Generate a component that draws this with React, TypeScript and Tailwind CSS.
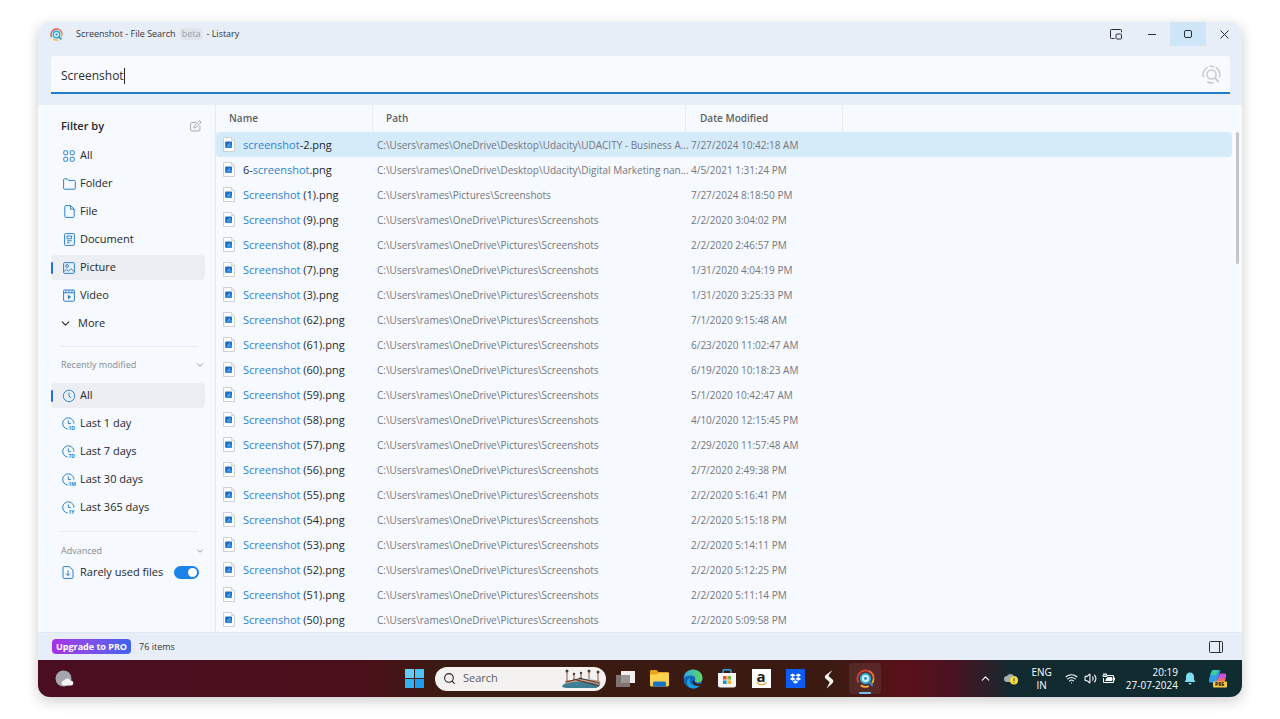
import React, { useState } from 'react';
import {
    Search,
    ChevronDown,
    ChevronUp,
    Wifi,
    Volume2,
} from 'lucide-react';

const files = [
    ['', 'screenshot', '-2.png', 'C:\\Users\\rames\\OneDrive\\Desktop\\Udacity\\UDACITY - Business A...', '7/27/2024 10:42:18 AM'],
    ['6-', 'screenshot', '.png', 'C:\\Users\\rames\\OneDrive\\Desktop\\Udacity\\Digital Marketing nan...', '4/5/2021 1:31:24 PM'],
    ['', 'Screenshot', ' (1).png', 'C:\\Users\\rames\\Pictures\\Screenshots', '7/27/2024 8:18:50 PM'],
    ['', 'Screenshot', ' (9).png', 'C:\\Users\\rames\\OneDrive\\Pictures\\Screenshots', '2/2/2020 3:04:02 PM'],
    ['', 'Screenshot', ' (8).png', 'C:\\Users\\rames\\OneDrive\\Pictures\\Screenshots', '2/2/2020 2:46:57 PM'],
    ['', 'Screenshot', ' (7).png', 'C:\\Users\\rames\\OneDrive\\Pictures\\Screenshots', '1/31/2020 4:04:19 PM'],
    ['', 'Screenshot', ' (3).png', 'C:\\Users\\rames\\OneDrive\\Pictures\\Screenshots', '1/31/2020 3:25:33 PM'],
    ['', 'Screenshot', ' (62).png', 'C:\\Users\\rames\\OneDrive\\Pictures\\Screenshots', '7/1/2020 9:15:48 AM'],
    ['', 'Screenshot', ' (61).png', 'C:\\Users\\rames\\OneDrive\\Pictures\\Screenshots', '6/23/2020 11:02:47 AM'],
    ['', 'Screenshot', ' (60).png', 'C:\\Users\\rames\\OneDrive\\Pictures\\Screenshots', '6/19/2020 10:18:23 AM'],
    ['', 'Screenshot', ' (59).png', 'C:\\Users\\rames\\OneDrive\\Pictures\\Screenshots', '5/1/2020 10:42:47 AM'],
    ['', 'Screenshot', ' (58).png', 'C:\\Users\\rames\\OneDrive\\Pictures\\Screenshots', '4/10/2020 12:15:45 PM'],
    ['', 'Screenshot', ' (57).png', 'C:\\Users\\rames\\OneDrive\\Pictures\\Screenshots', '2/29/2020 11:57:48 AM'],
    ['', 'Screenshot', ' (56).png', 'C:\\Users\\rames\\OneDrive\\Pictures\\Screenshots', '2/7/2020 2:49:38 PM'],
    ['', 'Screenshot', ' (55).png', 'C:\\Users\\rames\\OneDrive\\Pictures\\Screenshots', '2/2/2020 5:16:41 PM'],
    ['', 'Screenshot', ' (54).png', 'C:\\Users\\rames\\OneDrive\\Pictures\\Screenshots', '2/2/2020 5:15:18 PM'],
    ['', 'Screenshot', ' (53).png', 'C:\\Users\\rames\\OneDrive\\Pictures\\Screenshots', '2/2/2020 5:14:11 PM'],
    ['', 'Screenshot', ' (52).png', 'C:\\Users\\rames\\OneDrive\\Pictures\\Screenshots', '2/2/2020 5:12:25 PM'],
    ['', 'Screenshot', ' (51).png', 'C:\\Users\\rames\\OneDrive\\Pictures\\Screenshots', '2/2/2020 5:11:14 PM'],
    ['', 'Screenshot', ' (50).png', 'C:\\Users\\rames\\OneDrive\\Pictures\\Screenshots', '2/2/2020 5:09:58 PM'],
];

const GridIcon = () => (
    <svg width="12" height="12" viewBox="0 0 12 12" fill="none" stroke="currentColor">
        <rect x="0.8" y="0.8" width="3.9" height="3.9" rx="0.8" />
        <rect x="7.3" y="0.8" width="3.9" height="3.9" rx="0.8" />
        <rect x="0.8" y="7.3" width="3.9" height="3.9" rx="0.8" />
        <rect x="7.3" y="7.3" width="3.9" height="3.9" rx="0.8" />
    </svg>
);

const FolderIcon = () => (
    <svg width="13" height="12" viewBox="0 0 13 12" fill="none" stroke="currentColor">
        <path d="M.6 1.6c0-.5.3-.8.8-.8h2.8l1.3 1.6h6c.5 0 .8.3.8.8v7.2c0 .5-.3.8-.8.8H1.4c-.5 0-.8-.3-.8-.8z" />
    </svg>
);

const FileIcon = () => (
    <svg width="11" height="13" viewBox="0 0 11 13" fill="none" stroke="currentColor">
        <path d="M.8 1.4c0-.4.3-.8.8-.8h5l3.6 3.5v7.5c0 .5-.3.8-.8.8H1.6c-.5 0-.8-.3-.8-.8zM6.5.8v3.4h3.6" />
    </svg>
);

const DocumentIcon = () => (
    <svg width="11" height="13" viewBox="0 0 11 13" fill="none" stroke="currentColor">
        <rect x="0.6" y="0.6" width="9.8" height="11.8" rx="1" />
        <path d="M3 3h4.6v2.8H3zM3 7.8h4.8M3 9.8h2.6" />
    </svg>
);

const PictureIcon = () => (
    <svg width="12" height="12" viewBox="0 0 12 12" fill="none" stroke="currentColor">
        <rect x="0.6" y="0.6" width="10.8" height="10.8" rx="1" />
        <circle cx="4.1" cy="4" r="1.4" />
        <path d="M.9 9.6l2.5-2.3 2 1.9 2.5-2.6 3.2 3" />
    </svg>
);

const VideoIcon = () => (
    <svg width="12" height="13" viewBox="0 0 12 13" fill="none" stroke="currentColor">
        <rect x="0.6" y="1" width="10.8" height="11.2" rx="1" />
        <path d="M.6 3.8h10.8M3.4 1.2l-.8 2.4M6.4 1.2l-.8 2.4M9.4 1.2l-.8 2.4" />
        <path d="M5 6l3 2-3 2z" fill="currentColor" strokeWidth="0.4" />
    </svg>
);

const ClockIcon = ({ tag }: { tag?: string }) => (
    <svg width="14" height="14" viewBox="0 0 14 14" fill="none" stroke="currentColor">
        {tag ? (
            <>
                <path d="M5.6 12A5.6 5.6 0 1 1 11.9 6.6M6.3 3.4v3.2h2.6" />
                <text x="6.4" y="13" fontSize="5" fontWeight="700" fill="currentColor" stroke="none">{tag}</text>
            </>
        ) : (
            <path d="M7 1.2a5.7 5.7 0 1 0 .01 0M7 3.6V7l2 2" />
        )}
    </svg>
);

const RareIcon = () => (
    <svg width="12" height="13" viewBox="0 0 12 13" fill="none" stroke="currentColor">
        <path d="M1 1.4c0-.4.3-.8.8-.8h5.4L11 4.1v7.5c0 .5-.3.8-.8.8H1.8c-.5 0-.8-.3-.8-.8zM6 4.4v5M4 7.6l2 2 2-2" />
    </svg>
);

const PngIcon = () => (
    <svg width="12" height="15" viewBox="0 0 12 15" className="shrink-0">
        <path d="M.5.5h8l3 3v11H.5z" fill="#fdfdfe" stroke="#cdd0d5" />
        <path d="M8.5.5v3h3" fill="#eceff2" stroke="#cdd0d5" strokeWidth="0.8" />
        <rect x="2.200" y="4.600" width="6.800" height="6.400" rx="1" fill="#1a6cc4" />
        <path d="M2.600 10.800l4-3.800 2.400 1.200v2c0 .5-.4.8-.9.8H3z" fill="#2f8fe6" />
        <path d="M4.600 9L7 6.200" stroke="#bfe3fa" strokeWidth="0.7" />
    </svg>
);

const Logo = ({ size }: { size: number }) => (
    <svg width={size} height={size} viewBox="0 0 20 20" fill="none">
        <path d="M2.600 14.200A8.600 8.600 0 0 1 13.500 2.200" stroke="#dc4238" strokeWidth="1.900" />
        <path d="M13.500 2.200a8.600 8.600 0 0 1 5 8.500" stroke="#e8752e" strokeWidth="1.900" />
        <path d="M18.500 10.700a8.600 8.600 0 0 1-1.700 4.300" stroke="#f3b63a" strokeWidth="1.900" />
        <path d="M5 17a8.600 8.600 0 0 0 8.500 1" stroke="#f3b63a" strokeWidth="1.900" />
        <circle cx="10" cy="10" r="5" fill="#c9eef5" stroke="#27a7cf" strokeWidth="2" />
        <circle cx="10" cy="10" r="1.500" fill="#2b86c9" />
        <path d="M13.600 13.600l4 4" stroke="#2b86c9" strokeWidth="2.200" />
    </svg>
);

const SearchLogo = () => (
    <svg width="19" height="19" viewBox="0 0 20 20" fill="none" stroke="#c8cbcf" strokeWidth="1.600">
        <path d="M1.600 13A8.800 8.800 0 0 1 6 2.200M8 1.400a8.800 8.800 0 0 1 5 .4M5.500 17.600a8.800 8.800 0 0 0 7 .8M14.500 2.600a8.800 8.800 0 0 1 3.800 10.500" />
        <circle cx="10" cy="10" r="4.800" />
        <path d="M13.400 13.400l4.400 4.400" strokeWidth="2" />
    </svg>
);

const typeFilters = [
    { name: 'All', icon: <GridIcon /> },
    { name: 'Folder', icon: <FolderIcon /> },
    { name: 'File', icon: <FileIcon /> },
    { name: 'Document', icon: <DocumentIcon /> },
    { name: 'Picture', icon: <PictureIcon /> },
    { name: 'Video', icon: <VideoIcon /> },
];

const dateFilters = [
    { name: 'All', icon: <ClockIcon /> },
    { name: 'Last 1 day', icon: <ClockIcon tag="1D" /> },
    { name: 'Last 7 days', icon: <ClockIcon tag="7D" /> },
    { name: 'Last 30 days', icon: <ClockIcon tag="1M" /> },
    { name: 'Last 365 days', icon: <ClockIcon tag="1Y" /> },
];

const FilterItem = ({ name, icon, active, onClick }: { name: string; icon: React.ReactNode; active: boolean; onClick: () => void }) => (
    <button
        onClick={onClick}
        className={`flex h-[25px] w-full items-center rounded-sm text-left ${active ? 'bg-[#edeef3]' : ''}`}
    >
        <span className={`h-3 w-[2px] rounded ${active ? 'bg-[#1976d2]' : ''}`}></span>
        <span className="ml-[9px] flex w-[14px] justify-center text-[#2b82d0]">{icon}</span>
        <span className="ml-1">{name}</span>
    </button>
);

const TitleBar = () => (
    <header className="flex h-[34px] items-start justify-between">
        <div className="flex h-6 items-center pl-3">
            <Logo size={13} />
            <h1 className="ml-[13px] flex items-center gap-1 text-[9px] text-[#33363b]">
                Screenshot - File Search
                <span className="rounded-sm bg-[#e0e4eb] px-[2px] leading-3 text-[#9a9fa8]">beta</span>
                - Listary
            </h1>
        </div>
        <div className="flex text-[#2a2d31]">
            <button aria-label="Compact view" className="flex h-6 w-9 items-center justify-center">
                <svg width="12" height="11" viewBox="0 0 12 11" fill="none" stroke="currentColor">
                    <path d="M4.5 9.5H1.3c-.5 0-.8-.3-.8-.8V1.3c0-.5.3-.8.8-.8h9.4c.5 0 .8.3.8.8v2" />
                    <rect x="6" y="5" width="5.5" height="5" rx="1" />
                </svg>
            </button>
            <button aria-label="Minimize" className="flex h-6 w-9 items-center justify-center">
                <span className="h-px w-2 bg-[#2a2d31]"></span>
            </button>
            <button aria-label="Maximize" className="flex h-6 w-9 items-center justify-center bg-[#cfe5f8]">
                <span className="size-2 rounded-[2px] border border-[#2a2d31]"></span>
            </button>
            <button aria-label="Close" className="flex h-6 w-9 items-center justify-center">
                <svg width="9" height="9" viewBox="0 0 9 9" stroke="currentColor">
                    <path d="M.5.5l8 8M8.5.5l-8 8" />
                </svg>
            </button>
        </div>
    </header>
);

const Sidebar = () => {
    const [type, setType] = useState('Picture');
    const [date, setDate] = useState('All');
    const [rare, setRare] = useState(true);

    return (
        <aside className="w-[178px] shrink-0 border-r border-[#e6e9f0] pr-[10px] pl-[13px] text-[11px] text-[#25282c]">
            <div className="flex h-[38px] items-center justify-between pt-1 pr-[3px] pl-[10px]">
                <h2 className="font-semibold">Filter by</h2>
                <button aria-label="Edit filters" className="text-[#a4a8ae]">
                    <svg width="12" height="12" viewBox="0 0 12 12" fill="none" stroke="currentColor">
                        <path d="M6.5 2.500H1.600c-.6 0-1 .4-1 1v6.400c0 .6.4 1 1 1h7.300c.6 0 1-.4 1-1V6" />
                        <path d="M3.800 8l.5-2L9.800.8l1.500 1.500-5.500 5.300z" />
                    </svg>
                </button>
            </div>
            <nav className="flex flex-col gap-[3px]">
                {typeFilters.map((item) => (
                    <FilterItem key={item.name} name={item.name} icon={item.icon} active={type === item.name} onClick={() => setType(item.name)} />
                ))}
                <button className="flex h-[25px] items-center pl-[8px]">
                    <ChevronDown size={13} strokeWidth={2} />
                    <span className="ml-[6px]">More</span>
                </button>
            </nav>

            <hr className="mt-[10px] mr-[7px] ml-[9px] border-[#e8eaf0]" />
            <button className="flex h-[36px] w-full items-center justify-between pl-[10px] text-[9px] text-[#858a92]">
                Recently modified
                <ChevronDown size={10} />
            </button>
            <nav className="flex flex-col gap-[3px]">
                {dateFilters.map((item) => (
                    <FilterItem key={item.name} name={item.name} icon={item.icon} active={date === item.name} onClick={() => setDate(item.name)} />
                ))}
            </nav>

            <hr className="mt-[11px] mr-[7px] ml-[9px] border-[#e8eaf0]" />
            <button className="mt-[9px] flex h-[20px] w-full items-center justify-between pl-[10px] text-[9px] text-[#858a92]">
                Advanced
                <ChevronDown size={10} />
            </button>
            <label className="flex h-[23px] items-center pr-[6px] pl-[11px]">
                <span className="text-[#2b82d0]"><RareIcon /></span>
                <span className="ml-[6px]">Rarely used files</span>
                <input type="checkbox" role="switch" checked={rare} onChange={() => setRare(!rare)} className="peer sr-only" />
                <span className="ml-auto flex h-[13px] w-[25px] items-center rounded-full bg-[#9aa0a8] px-[2px] peer-checked:justify-end peer-checked:bg-[#1a83ea]">
                    <span className="size-[9px] rounded-full bg-white"></span>
                </span>
            </label>
        </aside>
    );
};

const FileTable = () => {
    const [selected, setSelected] = useState(0);

    return (
        <section className="flex min-w-0 flex-1">
            <div className="min-w-0 flex-1">
                <table className="w-full table-fixed border-separate border-spacing-0">
                    <colgroup>
                        <col className="w-[157px]" />
                        <col className="w-[313px]" />
                        <col className="w-[157px]" />
                        <col />
                    </colgroup>
                    <thead>
                        <tr className="h-[27px] text-left text-[10px] text-[#5b5f66]">
                            <th className="border-r border-[#e8ebf1] p-0 pl-[13px] font-semibold">Name</th>
                            <th className="border-r border-[#e8ebf1] p-0 pl-[13px] font-semibold">Path</th>
                            <th className="border-r border-[#e8ebf1] p-0 pl-[14px] font-semibold">Date Modified</th>
                            <th className="p-0"></th>
                        </tr>
                    </thead>
                    <tbody>
                        {files.map(([before, match, after, path, date], index) => (
                            <tr
                                key={index}
                                onClick={() => setSelected(index)}
                                className={`h-[25px] text-[10px] leading-4 whitespace-nowrap text-[#73777e] ${selected === index ? '*:bg-[#d6ebfa]' : ''}`}
                            >
                                <td className="rounded-l-sm p-0">
                                    <div className="flex items-center pl-[7px] text-[11px] text-[#25282c]">
                                        <PngIcon />
                                        <span className="ml-2 whitespace-pre">{before}<span className="text-[#2b84d0]">{match}</span>{after}</span>
                                    </div>
                                </td>
                                <td className="p-0 pl-1">{path}</td>
                                <td className="p-0 pl-[5px]">{date}</td>
                                <td className="rounded-r-sm p-0"></td>
                            </tr>
                        ))}
                    </tbody>
                </table>
            </div>
            <div className="w-[10px] shrink-0 pt-[27px] pl-1">
                <div className="h-[132px] w-[3px] rounded-full bg-[#c3c5c9]"></div>
            </div>
        </section>
    );
};

const taskApps = [
    {
        name: 'Task view',
        icon: (
            <svg width="19" height="18" viewBox="0 0 19 18">
                <rect x="5" y="1" width="14" height="12" fill="#f1f0ef" />
                <rect x="0" y="5" width="14" height="12" fill="#8c8583" opacity="0.85" />
            </svg>
        ),
    },
    {
        name: 'File Explorer',
        icon: (
            <svg width="19" height="17" viewBox="0 0 19 17">
                <path d="M0 1.6C0 .7.6 0 1.5 0h5l2 2h9c.8 0 1.5.6 1.5 1.5V12H0z" fill="#e8a21c" />
                <path d="M0 4.5h7L9 3h10v12c0 .8-.6 1.4-1.4 1.4H1.4C.6 16.400 0 15.800 0 15z" fill="#fbd24f" />
                <path d="M3 16.400v-3.600c0-.8.6-1.400 1.400-1.400h10.200c.8 0 1.400.6 1.400 1.400v3.600z" fill="#1974c9" />
            </svg>
        ),
    },
    {
        name: 'Edge',
        icon: (
            <svg width="20" height="20" viewBox="0 0 20 20">
                <defs>
                    <linearGradient id="edgeTop" x1="0" x2="1">
                        <stop offset="0" stopColor="#2fa9e8" />
                        <stop offset="1" stopColor="#62d85a" />
                    </linearGradient>
                </defs>
                <circle cx="10" cy="10" r="9.5" fill="#1267b8" />
                <path d="M.6 9C1.200 4 5.200.5 10 .5c5.600 0 9.500 4 9.500 8.400 0 2.900-2.300 4.600-4.900 4.600-1.900 0-3.300-.8-2.600-2 .9-1.500.3-4.900-4.100-5C4.200 6.400 1.300 8 .6 9z" fill="url(#edgeTop)" />
                <path d="M7.600 8.600c-2.500 3.200.2 8.300 5.100 8.500 2.400.1 4.300-.6 5.500-1.800-1.600 2.700-4.700 4.200-8 4.200-4.400-.4-6.700-3.800-6.200-7 .3-2.200 1.800-3.600 3.600-3.900z" fill="#1b9de2" />
                <path d="M12.500 13.800c1.900 1.700 5 1.500 6.600.2l-1.200 2.200c-2.500 1.400-5.900.5-7.500-1.200-1.200-1.400-.9-3.200.6-4.200-.1 1.200.4 2.200 1.500 3z" fill="#3c1a12" />
            </svg>
        ),
    },
    {
        name: 'Store',
        icon: (
            <svg width="18" height="19" viewBox="0 0 18 19">
                <path d="M5 4V2c0-.8.500-1.300 1.300-1.300h5.400c.8 0 1.300.5 1.300 1.300v2" fill="none" stroke="#2aa8e8" strokeWidth="1.500" />
                <path d="M0 4h18v12.200c0 1.300-1 2.300-2.300 2.300H2.300C1 18.500 0 17.500 0 16.200z" fill="#f6f6f6" />
                <rect x="5" y="7" width="3.600" height="3.600" fill="#e8532b" />
                <rect x="9.400" y="7" width="3.600" height="3.600" fill="#7cb82f" />
                <rect x="5" y="11.400" width="3.600" height="3.600" fill="#1b93d8" />
                <rect x="9.400" y="11.400" width="3.600" height="3.600" fill="#f6b52a" />
            </svg>
        ),
    },
    {
        name: 'Amazon',
        icon: (
            <span className="relative flex size-[19px] justify-center bg-white text-[15px] leading-[15px] font-bold text-[#1d1d22]">
                a
                <svg width="11" height="4" viewBox="0 0 11 4" fill="none" stroke="#f0a030" className="absolute bottom-[2px]">
                    <path d="M.5.5c3 2.600 7 2.600 10 0" strokeWidth="1.200" />
                </svg>
            </span>
        ),
    },
    {
        name: 'Dropbox',
        icon: (
            <svg width="19" height="19" viewBox="0 0 19 19">
                <rect width="19" height="19" fill="#0a5cf5" />
                <path d="M6.700 4.500L9.500 6.300 6.700 8.100 3.900 6.300zM12.300 4.500l2.800 1.800-2.800 1.800-2.800-1.800zM6.700 8.100l2.800 1.800-2.800 1.800-2.800-1.800zM12.300 8.100l2.800 1.800-2.800 1.800-2.800-1.800zM9.500 11.200l2.800 1.800-2.800 1.800-2.800-1.800z" fill="#fff" />
            </svg>
        ),
    },
    {
        name: 'Launcher',
        icon: (
            <svg width="12" height="20" viewBox="0 0 12 20">
                <path d="M9.500 1L2.800 6c-1.300 1.100-1.300 2.700 0 3.800L6 12.500c.6.500.7 1 .3 1.800L3.500 19.500l5.700-5c1.500-1.400 1.500-3 .1-4.200L6.300 7.800c-.7-.6-.8-1.200-.3-2z" fill="#f7f3f1" />
            </svg>
        ),
    },
];

const Taskbar = () => (
    <footer className="grid h-[37px] grid-cols-[1fr_auto_1fr] items-center bg-[linear-gradient(90deg,#4a0e22_0%,#4b0f1a_27%,#3b1a11_33%,#3b1a11_66%,#5a1119_72%,#4a1222_76%,#122a30_81%,#0f2c30_100%)] text-white">
        <button aria-label="Weather" className="ml-[17px] size-5">
            <svg width="20" height="18" viewBox="0 0 20 18">
                <circle cx="8.500" cy="8.500" r="8" fill="#a3a6ab" />
                <path d="M9 15.500a2.500 2.500 0 0 1 0-5 3.600 3.600 0 0 1 6.500 0 2.500 2.500 0 0 1 .5 5z" fill="#f2f3f5" />
            </svg>
        </button>

        <div className="flex items-center pl-[6px]">
            <button aria-label="Start" className="grid size-[19px] grid-cols-2 gap-px">
                <span className="bg-[#62cdf8]"></span>
                <span className="bg-[#4cc2f6]"></span>
                <span className="bg-[#35b1f2]"></span>
                <span className="bg-[#1f9cec]"></span>
            </button>
            <label className="ml-[11px] flex h-6 w-[171px] items-center overflow-hidden rounded-full bg-[#f4f2f1] pl-2 text-[#222]">
                <Search size={13} />
                <input type="text" aria-label="Search" placeholder="Search" className="ml-[7px] w-[90px] bg-transparent text-[11px] outline-none placeholder:text-[#5c5c5c]" />
                <svg width="42" height="20" viewBox="0 0 42 20" className="ml-2">
                    <path d="M1 17c5-5 11-6 19-7l14 1 5 2c1 3-1 5-4 6H6c-3 0-5-1-5-2z" fill="#3f7f96" />
                    <path d="M4 12c8-2 20-2 35 0l-1 4c-9-4-22-5-34-1z" fill="#d09b80" />
                    <path d="M12 10l26 7M18 9l20 5M5 13l16-4" stroke="#50322c" />
                    <path d="M6 2v10M13 5v6M20 4v5M28 2v8M37 3v9" stroke="#8a5a4a" strokeWidth="1" />
                    <circle cx="6" cy="2" r="1.500" fill="#4a3a38" />
                    <circle cx="13" cy="5" r="1.200" fill="#4a3a38" />
                    <circle cx="20" cy="4" r="1.200" fill="#4a3a38" />
                    <circle cx="28" cy="2" r="1.500" fill="#4a3a38" />
                    <circle cx="37" cy="3" r="1.500" fill="#4a3a38" />
                </svg>
            </label>
            <div className="ml-[2px] flex">
                {taskApps.map((app) => (
                    <button key={app.name} aria-label={app.name} className="flex w-[34px] items-center justify-center">{app.icon}</button>
                ))}
            </div>
            <button aria-label="Listary" className="relative ml-[3px] flex h-[31px] w-8 items-center justify-center rounded-sm bg-white/8">
                <Logo size={19} />
                <span className="absolute bottom-0 h-[2px] w-3 rounded-full bg-[#6cc4ee]"></span>
            </button>
        </div>

        <div className="flex items-center justify-end pr-[14px] text-[10px] leading-[13px]">
            <ChevronUp size={13} />
            <svg width="15" height="13" viewBox="0 0 15 13" className="ml-[12px]">
                <path d="M3 10a3 3 0 0 1 0-6 4 4 0 0 1 7 0 3 3 0 0 1 1 6z" fill="#a9adb2" />
                <circle cx="10" cy="8.500" r="4" fill="#f7e03a" />
                <path d="M10 6.200v2.800M10 9.900v1" stroke="#333" />
            </svg>
            <div className="ml-3 text-center">ENG<br />IN</div>
            <Wifi size={13} className="ml-[13px]" />
            <Volume2 size={13} className="ml-[6px]" />
            <svg width="14" height="11" viewBox="0 0 14 11" fill="none" stroke="currentColor" className="ml-[5px]">
                <path d="M5 2.500h6.500v7H1.500V5" />
                <path d="M5.500 4.500H10v3H3.500z" fill="currentColor" />
                <path d="M12.500 4.500v3M2 0v2M4 0v2M1 2h4v1.500H1z" />
            </svg>
            <div className="ml-[10px] text-right">20:19<br />27-07-2024</div>
            <svg width="12" height="13" viewBox="0 0 12 13" fill="#7fdcf2" className="ml-[6px]">
                <path d="M6 .5c2.500 0 4 1.800 4 4v3L11.300 10H.7L2 7.500v-3c0-2.200 1.500-4 4-4zM4.500 11h3c0 1-.6 1.500-1.500 1.500S4.500 12 4.500 11z" />
            </svg>
            <svg width="20" height="19" viewBox="0 0 20 19" className="ml-[12px]">
                <path d="M5 1h6c1 0 1.500.6 1.200 1.500L9 12c-.3 1-1 1.500-2 1.500H2.500C1 13.500.5 12 1 10.500l2-7.500C3.400 1.700 4 1 5 1z" fill="#2f9de8" />
                <path d="M5 1h5.500L8 6H2.300z" fill="#3ccf9a" />
                <path d="M12 4.500h4.500c1.500 0 2 1.500 1.500 3l-1.500 6H8z" fill="#d250d8" />
                <path d="M10 9.500h7.500l-1 4H8.500z" fill="#f0705a" />
                <rect x="5" y="12.500" width="14" height="6" rx="1" fill="#f6cc3c" />
                <text x="7" y="17.300" fontSize="5" fontWeight="800" fill="#3a2a10">PRE</text>
            </svg>
        </div>
    </footer>
);

const App = () => {
    const [query, setQuery] = useState('Screenshot');

    return (
        <div className="min-h-screen bg-white px-[38px] py-[22px] font-['Open_Sans','Noto_Sans',sans-serif]">
            <main className="overflow-hidden rounded-xl bg-[#e7eef8] shadow-[0_4px_14px_rgba(0,0,0,0.2)]">
                <TitleBar />
                <div className="mr-3 mb-[11px] ml-[13px] flex h-[38px] items-center rounded-t-sm border-b-2 border-[#1f7ccb] bg-[#f8fafd] pr-[9px] pl-[10px]">
                    <div className="flex flex-1 items-center pt-1">
                        <input
                            type="text"
                            aria-label="Search files"
                            value={query}
                            onChange={(e) => setQuery(e.target.value)}
                            className="field-sizing-content bg-transparent text-[12px] text-[#2b2e33] outline-none"
                        />
                        <span className="h-4 w-px bg-[#222]"></span>
                    </div>
                    <SearchLogo />
                </div>
                <div className="flex border-b border-[#e1e7f0] bg-[#f6f9fe]">
                    <Sidebar />
                    <FileTable />
                </div>
                <div className="flex h-[27px] items-center pr-[19px] pl-[14px] text-[9px] text-[#33363b]">
                    <button className="rounded-sm bg-linear-to-r from-[#a62fe6] to-[#3b62ee] px-1 leading-[15px] font-bold text-white">Upgrade to PRO</button>
                    <span className="ml-2">76 items</span>
                    <button aria-label="Toggle preview" className="ml-auto">
                        <svg width="14" height="12" viewBox="0 0 14 12" fill="none" stroke="#2a2d31">
                            <rect x="0.500" y="0.500" width="13" height="11" rx="1" />
                            <path d="M10.500.5v11" />
                        </svg>
                    </button>
                </div>
                <Taskbar />
            </main>
        </div>
    );
};

export default App;
